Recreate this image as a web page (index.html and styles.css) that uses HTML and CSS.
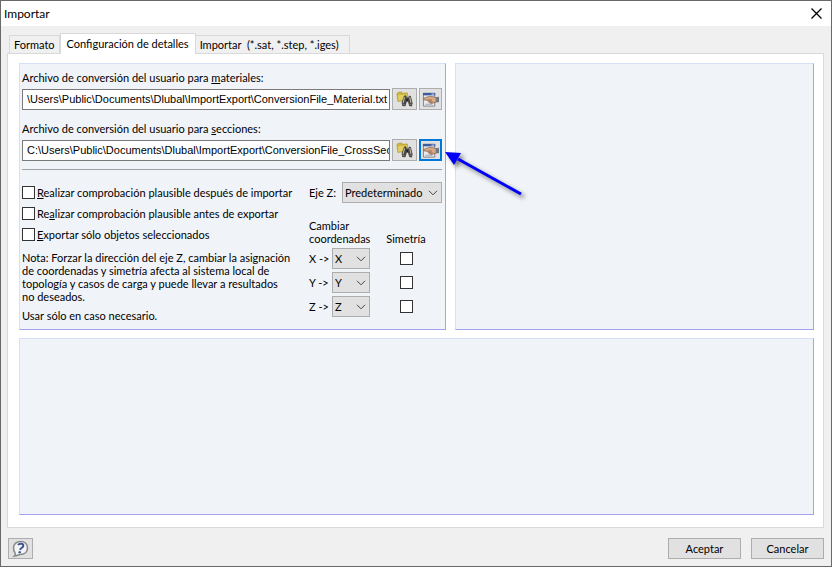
FILE: index.html
```html
<!DOCTYPE html>
<html lang="es">
<head>
  <meta charset="utf-8">
  <title>Importar</title>
  <link rel="stylesheet" href="styles.css">
</head>

<body>
  <!-- shared icons -->
  <svg class="icon-defs" aria-hidden="true">
    <symbol id="icon-browse" viewBox="0 0 18 18">
      <path d="M1 3 L2 1.5 L6 1 L7 2.5 L12 2 L12 9.5 L2 11 Z" fill="#cdb53a" stroke="#a8912c" stroke-width=".7"/>
      <path d="M2 4.5 L11.5 3.5 L11.5 9 L2.5 10.3 Z" fill="#e2cf60"/>
      <path d="M8.5 5 L10.5 4.5 L11.5 7 L13 7 L13.8 4.8 L15.8 5.5 L17.6 13 L16.8 16.5 L14 16 L12.7 11.5 L11.4 11.5 L10 16.2 L6.5 15.8 L6 12 Z" fill="#4a4842"/>
      <path d="M9 6.5 L7.6 12.5 M14.6 6.5 L15.8 12.5" stroke="#b9b5ab" stroke-width="1.2"/>
      <path d="M7 13.8 L9 14.5 M14.5 14.3 L16.4 14" stroke="#85817a" stroke-width="1.2"/>
      <path d="M11 8.4 L13 8.4 L12.6 10.6 L11.3 10.6 Z" fill="#1d1c1a"/>
    </symbol>
    <symbol id="icon-edit" viewBox="0 0 18 18">
      <path d="M1.5 2.5 H13.5 V16 H1.5 Z" fill="#e9ebef" stroke="#7b7f88"/>
      <path d="M1 2 H14 V4.6 H1 Z" fill="#3c5c9e"/>
      <path d="M10 3.3 H13" stroke="#d8e2f7"/>
      <path d="M3.5 14 H11" stroke="#9aa3b4"/>
      <path d="M1.5 8 C4 7 6 5.8 9 5.8 L13 6.3 L15.5 7.5 L15.5 11.5 L12 12.7 C10 13.5 8 12.9 6.5 11.2 L6.5 9.8 L2 9.4 Z" fill="#d9aa83" stroke="#85614a" stroke-width=".8"/>
      <path d="M6.5 9.8 L10 9 M7.5 11.2 L10.5 10.3 M9 12.3 L11.5 11.4" stroke="#765340" stroke-width=".7"/>
      <path d="M14.5 6.5 L18 6 V12 L14.5 11.8 Z" fill="#73777e"/>
    </symbol>
  </svg>

  <div class="dialog">
    <header class="title-bar">
      <h1>Importar</h1>
      <button type="button" class="close-btn" aria-label="Cerrar">
        <svg width="11" height="11" viewBox="0 0 11 11"><path d="M.5 .5 L10.5 10.5 M10.5 .5 L.5 10.5" stroke="#000" stroke-width="1.3"/></svg>
      </button>
    </header>

    <nav class="tabs">
      <button type="button" class="tab">Formato</button>
      <button type="button" class="tab active">Configuración de detalles</button>
      <button type="button" class="tab">Importar&nbsp; (*.sat, *.step, *.iges)</button>
    </nav>

    <main class="tab-page">
      <section class="panel settings">
        <label class="file-label" for="material-file">Archivo de conversión del usuario para <u>m</u>ateriales:</label>
        <div class="file-row">
          <input type="text" id="material-file" value="\Users\Public\Documents\Dlubal\ImportExport\ConversionFile_Material.txt">
          <button type="button" class="icon-btn" aria-label="Examinar archivo de materiales"><svg><use href="#icon-browse"/></svg></button>
          <button type="button" class="icon-btn edit" aria-label="Editar archivo de materiales"><svg><use href="#icon-edit"/></svg></button>
        </div>

        <label class="file-label" for="section-file">Archivo de conversión del usuario para <u>s</u>ecciones:</label>
        <div class="file-row">
          <input type="text" id="section-file" value="C:\Users\Public\Documents\Dlubal\ImportExport\ConversionFile_CrossSect">
          <button type="button" class="icon-btn" aria-label="Examinar archivo de secciones"><svg><use href="#icon-browse"/></svg></button>
          <div class="pointed">
            <button type="button" class="icon-btn edit focused" aria-label="Editar archivo de secciones"><svg><use href="#icon-edit"/></svg></button>
            <svg class="arrow" width="90" height="60" viewBox="0 0 90 60" aria-hidden="true">
              <path d="M14 9 L77 44" stroke="#0000fa" stroke-width="3"/>
              <path d="M1 2 L17 3 L10 15 Z" fill="#0000fa"/>
            </svg>
          </div>
        </div>

        <hr>

        <div class="options">
          <div class="checks">
            <label class="check"><input type="checkbox"><span><u>R</u>ealizar comprobación plausible después de importar</span></label>
            <label class="check"><input type="checkbox"><span>Re<u>a</u>lizar comprobación plausible antes de exportar</span></label>
            <label class="check"><input type="checkbox"><span><u>E</u>xportar sólo objetos seleccionados</span></label>
            <p>Nota: Forzar la dirección del eje Z, cambiar la asignación<br>de coordenadas y simetría afecta al sistema local de<br>topología y casos de carga y puede llevar a resultados<br>no deseados.</p>
            <p>Usar sólo en caso necesario.</p>
          </div>

          <div class="axes">
            <div class="axis-z">
              <label for="z-axis">Eje Z:</label>
              <select id="z-axis"><option>Predeterminado</option></select>
            </div>
            <div class="axis-grid">
              <span class="axis-head">Cambiar<br>coordenadas</span>
              <span class="axis-head center">Simetría</span>

              <label for="map-x">X -&gt;</label>
              <select id="map-x"><option>X</option><option>Y</option><option>Z</option></select>
              <input type="checkbox" aria-label="Simetría X">

              <label for="map-y">Y -&gt;</label>
              <select id="map-y"><option>Y</option><option>X</option><option>Z</option></select>
              <input type="checkbox" aria-label="Simetría Y">

              <label for="map-z">Z -&gt;</label>
              <select id="map-z"><option>Z</option><option>X</option><option>Y</option></select>
              <input type="checkbox" aria-label="Simetría Z">
            </div>
          </div>
        </div>
      </section>

      <section class="panel"></section>
      <section class="panel wide"></section>
    </main>

    <footer class="buttons">
      <button type="button" class="help-btn" aria-label="Ayuda">
        <svg width="18" height="18" viewBox="0 0 18 18">
          <path d="M8.5 1.5 C13 1.5 15.5 4.5 15.5 8 C15.5 12 12.5 14.5 8.5 14.5 C7 14.5 6 15.5 2.5 16 C3.5 15 3.5 14 3 12.8 C2 11.5 1.5 10 1.5 8 C1.5 4.5 4.3 1.5 8.5 1.5 Z" fill="#f4f5f7" stroke="#8c8c8c" stroke-width="1.6"/>
          <path d="M6 5 C7.3 3 11.5 3.2 11.3 5.8 C11.1 7.8 8.5 7.7 8.1 10" fill="none" stroke="#3f5592" stroke-width="2"/>
          <circle cx="7.7" cy="12.2" r="1.2" fill="#3f5592"/>
        </svg>
      </button>
      <button type="button" class="push-btn">Aceptar</button>
      <button type="button" class="push-btn">Cancelar</button>
    </footer>
  </div>
</body>
</html>
```
FILE: styles.css
```css
* {
  box-sizing: border-box;
}

body {
  margin: 0;
  font-family: Tahoma, Lato, sans-serif;
  font-size: 11px;
  line-height: 13px;
  color: #000;
}

button, input, select {
  font: inherit;
  color: inherit;
  margin: 0;
}

.icon-defs {
  display: none;
}

.dialog {
  display: flex;
  flex-direction: column;
  min-height: 100vh;
  border: 1px solid #696969;
  background-color: #f0f0f0;
}

/* title bar */
.title-bar {
  display: flex;
  align-items: center;
  justify-content: space-between;
  height: 25px;
  padding: 0 9px 0 3px;
  background-color: #fff;
}

h1 {
  margin: 0;
  font-size: 12px;
  font-weight: normal;
}

.close-btn {
  display: flex;
  padding: 0;
  border: none;
  background: none;
}

/* tabs */
.tabs {
  display: flex;
  align-items: flex-end;
  height: 27px;
  padding-left: 8px;
}

.tab {
  height: 18px;
  padding: 0 4px;
  border: 1px solid #d9d9d9;
  border-bottom: none;
  background-color: #f0f0f0;
  white-space: nowrap;
}

.tab + .tab {
  border-left: none;
}

.tab:last-child {
  padding: 0 10px 0 4px;
}

.tab.active {
  position: relative;
  height: 21px;
  margin-bottom: -1px;
  padding: 0 6px 2px;
  border-left: 1px solid #d9d9d9;
  background-color: #fff;
}

.tab-page {
  flex: 1;
  display: grid;
  grid-template-columns: 427fr 359fr;
  grid-template-rows: auto 1fr;
  gap: 8px 9px;
  margin: 0 7px 0 6px;
  padding: 9px 9px 12px 11px;
  border: 1px solid #d9d9d9;
  background-color: #fff;
}

.panel {
  border: 1px solid #d3e0f5;
  border-right-color: #a4a4ee;
  border-bottom-color: #a4a4ee;
  background-color: #f0f4f9;
}

.panel.wide {
  grid-column: 1 / 3;
}

.settings {
  padding: 7px 3px 2px 2px;
}

/* conversion files */
.file-label {
  display: block;
  margin-bottom: 4px;
}

.file-row {
  display: flex;
  align-items: center;
  gap: 2px;
  margin-bottom: 12px;
}

.file-row input {
  flex: 1;
  min-width: 0;
  height: 21px;
  padding: 0 0 0 4px;
  border: 1px solid #7a7a7a;
  background-color: #fff;
  font-family: Tahoma, "Liberation Sans", sans-serif;
}

.icon-btn {
  display: flex;
  align-items: center;
  justify-content: center;
  width: 25px;
  height: 22px;
  padding: 0;
  border: 1px solid #adadad;
  background-color: #e1e1e1;
}

.icon-btn svg {
  width: 17px;
  height: 17px;
}

.icon-btn.edit {
  width: 23px;
}

.icon-btn.focused {
  border: 2px solid #0078d7;
}

.pointed {
  position: relative;
}

.arrow {
  position: absolute;
  left: 25px;
  top: 11px;
  filter: drop-shadow(3px 3px 2px rgba(0, 0, 0, 0.5));
}

hr {
  margin: -4px 0 12px;
  border: none;
  border-top: 1px solid #a0a0a0;
}

/* options */
.options {
  display: flex;
  justify-content: space-between;
}

.check {
  display: flex;
  align-items: center;
  gap: 2px;
  height: 21px;
  white-space: nowrap;
}

input[type="checkbox"] {
  appearance: none;
  width: 13px;
  height: 13px;
  border: 1px solid #333;
  background-color: #fff;
}

.checks p {
  margin: 6px 0 5px;
  white-space: nowrap;
}

.axes {
  width: 133px;
}

.axis-z {
  display: flex;
  align-items: center;
  gap: 6px;
  white-space: nowrap;
}

.axis-z select {
  flex: 1;
  min-width: 0;
}

select {
  appearance: none;
  height: 21px;
  padding: 0 16px 0 2px;
  border: 1px solid #adadad;
  border-radius: 0;
  background: #e1e1e1 url("data:image/svg+xml,%3Csvg xmlns='http://www.w3.org/2000/svg' width='10' height='6'%3E%3Cpath d='M1 .8 L5 4.8 L9 .8' fill='none' stroke='%23444'/%3E%3C/svg%3E") no-repeat right 3px center;
}

.axis-grid {
  display: grid;
  grid-template-columns: 23px 38px 1fr;
  align-items: center;
  row-gap: 3px;
  margin-top: 16px;
}

.axis-head {
  grid-column: 1 / 3;
  white-space: nowrap;
}

.axis-head.center {
  grid-column: 3;
  align-self: end;
  text-align: center;
}

.axis-grid input {
  justify-self: center;
}

/* bottom buttons */
.buttons {
  display: flex;
  gap: 10px;
  padding: 10px 7px 7px;
}

.help-btn {
  display: flex;
  align-items: center;
  justify-content: center;
  width: 25px;
  height: 21px;
  margin-right: auto;
  padding: 0;
  border: 1px solid #adadad;
  background-color: #e1e1e1;
}

.push-btn {
  width: 73px;
  height: 21px;
  padding: 0;
  border: 1px solid #adadad;
  background-color: #e1e1e1;
}
```
